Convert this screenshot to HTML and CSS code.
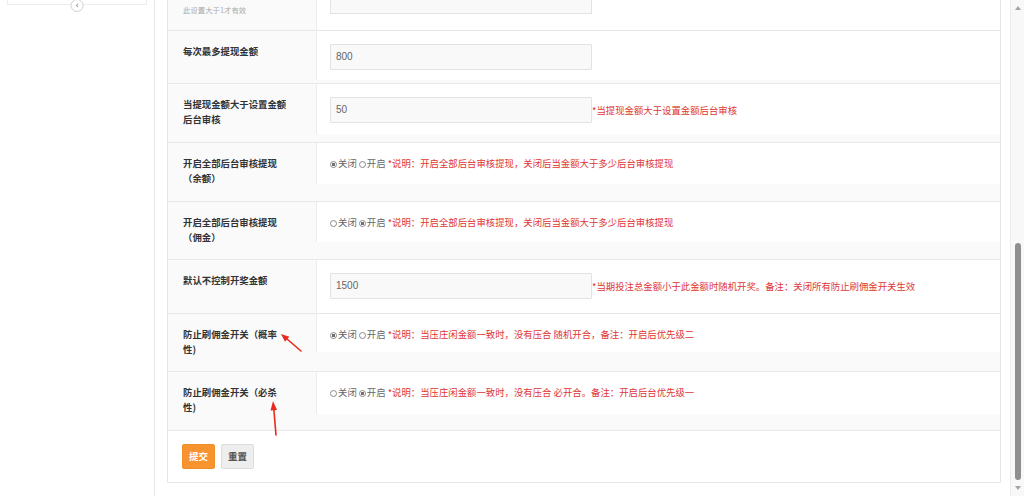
FILE: index.html
```html
<!DOCTYPE html>
<html lang="zh-CN">
<head>
<meta charset="utf-8">
<title>提现设置</title>
<link rel="stylesheet" href="styles.css">
</head>
<body>
<aside class="sidebar">
  <div class="side-top"><span class="collapse">‹</span></div>
</aside>
<main class="main">
  <div class="panel">
    <div class="row row-0">
      <div class="label label-tip"><span class="tip">此设置大于1才有效</span></div>
      <div class="cell cell-0"><div class="input input-cut"></div></div>
    </div>
    <div class="row row-1">
      <div class="label">每次最多提现金额</div>
      <div class="cell cell-1"><div class="field"><div class="input">800</div></div></div>
    </div>
    <div class="row row-2">
      <div class="label">当提现金额大于设置金额后台审核</div>
      <div class="cell cell-2"><div class="field"><div class="input">50</div><span class="note">*当提现金额大于设置金额后台审核</span></div></div>
    </div>
    <div class="row row-3">
      <div class="label">开启全部后台审核提现（余额）</div>
      <div class="cell cell-3"><div class="options"><span class="radio on"></span>关闭 <span class="radio"></span>开启 <span class="note">*说明：开启全部后台审核提现，关闭后当金额大于多少后台审核提现</span></div></div>
    </div>
    <div class="row row-4">
      <div class="label">开启全部后台审核提现（佣金）</div>
      <div class="cell cell-4"><div class="options"><span class="radio"></span>关闭 <span class="radio on"></span>开启 <span class="note">*说明：开启全部后台审核提现，关闭后当金额大于多少后台审核提现</span></div></div>
    </div>
    <div class="row row-5">
      <div class="label">默认不控制开奖金额</div>
      <div class="cell cell-5"><div class="field"><div class="input">1500</div><span class="note">*当期投注总金额小于此金额时随机开奖。备注：关闭所有防止刷佣金开关生效</span></div></div>
    </div>
    <div class="row row-6">
      <div class="label">防止刷佣金开关（概率性)</div>
      <div class="cell cell-6"><div class="options"><span class="radio on"></span>关闭 <span class="radio"></span>开启 <span class="note">*说明：当压庄闲金额一致时，没有压合 随机开合，备注：开启后优先级二</span></div></div>
    </div>
    <div class="row row-7">
      <div class="label">防止刷佣金开关（必杀性)</div>
      <div class="cell cell-7"><div class="options"><span class="radio"></span>关闭 <span class="radio on"></span>开启 <span class="note">*说明：当压庄闲金额一致时，没有压合 必开合。备注：开启后台优先级一</span></div></div>
    </div>
    <div class="actions">
      <span class="btn btn-primary">提交</span>
      <span class="btn btn-default">重置</span>
    </div>
  </div>
</main>
<div class="scrollbar">
  <span class="sb-up"></span>
  <span class="sb-thumb"></span>
  <span class="sb-down"></span>
</div>
<svg class="arrows" width="1024" height="496" viewBox="0 0 1024 496">
  <line x1="301" y1="351" x2="287" y2="339" stroke="#e8291e" stroke-width="1.6" stroke-linecap="round"/>
  <polygon points="281,334 289.3,336.7 285,341.7" fill="#e8291e"/>
  <line x1="276" y1="435" x2="273.8" y2="409" stroke="#e8291e" stroke-width="1.6" stroke-linecap="round"/>
  <polygon points="273,401 277,410 270.5,410.4" fill="#e8291e"/>
</svg>
</body>
</html>
```

FILE: styles.css
```css
html, body {
  margin: 0;
  padding: 0;
}

body {
  position: relative;
  width: 1024px;
  height: 496px;
  overflow: hidden;
  display: flex;
  background: #fff;
  font-family: "Noto Sans CJK SC", "Noto Sans", sans-serif;
  color: #333;
}

/* ---------- sidebar ---------- */
.sidebar {
  flex: none;
  width: 154px;
  border-right: 1px solid #e6e6e6;
}

.side-top {
  position: relative;
  margin: 0 7px;
  height: 4px;
  border: 1px solid #ececec;
  border-top: none;
}

.collapse {
  position: absolute;
  left: 50%;
  top: -1px;
  transform: translateX(-50%);
  width: 11px;
  height: 11px;
  border: 1px solid #d2d2d2;
  border-radius: 50%;
  background: #fff;
  color: #777;
  font-family: "DejaVu Sans", sans-serif;
  font-size: 9px;
  line-height: 10px;
  text-align: center;
}

/* ---------- main ---------- */
.main {
  flex: none;
  width: 855px;
  box-sizing: border-box;
  padding-left: 12px;
}

.panel {
  width: 834px;
  box-sizing: border-box;
  border: 1px solid #e6e6e6;
  border-top: none;
}

.row {
  display: flex;
  align-items: flex-start;
  background: #fafafa;
  border-bottom: 1px solid #e8e8e8;
}

.row-0 { height: 30px; }
.row-1 { height: 52px; }
.row-2 { height: 58px; }
.row-3 { height: 58px; }
.row-4 { height: 57px; }
.row-5 { height: 53px; }
.row-6 { height: 57px; }
.row-7 { height: 58px; }

.label {
  flex: none;
  width: 148px;
  box-sizing: border-box;
  padding: 12.5px 28px 0 15px;
  font-size: 9.4px;
  line-height: 15px;
  font-weight: bold;
  color: #333;
}

.label-tip {
  padding-top: 2px;
}

.tip {
  font-size: 7.4px;
  line-height: 10px;
  font-weight: normal;
  color: #aaa;
}

.cell {
  flex: 1;
  box-sizing: border-box;
  background: #fff;
  border-left: 1px solid #ececec;
  padding: 13px 0 0 13px;
}

.cell-0 { height: 30px; padding-top: 0; }
.cell-1 { height: 49px; }
.cell-2 { height: 50px; }
.cell-3 { height: 41px; }
.cell-4 { height: 40px; }
.cell-5 { height: 53px; }
.cell-6 { height: 38px; }
.cell-7 { height: 42px; }

.field {
  display: flex;
  align-items: center;
}

.input {
  flex: none;
  width: 262px;
  height: 26px;
  box-sizing: border-box;
  border: 1px solid #e2e2e2;
  border-radius: 1px;
  background: #f9f9f9;
  padding-left: 5px;
  font-family: "Liberation Sans", sans-serif;
  font-size: 10px;
  line-height: 24px;
  color: #666;
}

.input-cut {
  height: 14px;
  border-top: none;
}

.note {
  color: #e03535;
  font-size: 9.4px;
  line-height: 15px;
  white-space: nowrap;
}

.options {
  font-size: 9.4px;
  line-height: 15px;
  color: #666;
  white-space: nowrap;
}

.radio {
  display: inline-block;
  width: 5px;
  height: 5px;
  border: 1px solid #8a8a8a;
  border-radius: 50%;
  background: #fff;
  vertical-align: -0.5px;
  margin-right: 1px;
}

.radio.on {
  background: radial-gradient(circle, #6e6e6e 0 1.4px, #fff 1.9px);
}

/* ---------- actions ---------- */
.actions {
  display: flex;
  gap: 6px;
  height: 51px;
  box-sizing: border-box;
  padding: 13px 14px 0;
  background: #fff;
}

.btn {
  height: 25px;
  box-sizing: border-box;
  padding: 0 6px;
  border-radius: 2px;
  font-size: 9.5px;
  font-weight: bold;
  line-height: 23px;
}

.btn-primary {
  background: #f7942f;
  border: 1px solid #f28c26;
  color: #fff;
}

.btn-default {
  background: #eeeeee;
  border: 1px solid #dcdcdc;
  color: #555;
}

/* ---------- scrollbar ---------- */
.scrollbar {
  flex: none;
  width: 14px;
  height: 496px;
  box-sizing: border-box;
  border-left: 1px solid #ececec;
  background: #f8f8f8;
  display: flex;
  flex-direction: column;
  align-items: center;
}

.sb-up {
  margin-top: 6px;
  width: 0;
  height: 0;
  border-left: 3px solid transparent;
  border-right: 3px solid transparent;
  border-bottom: 4px solid #a3a3a3;
}

.sb-thumb {
  margin-top: 233px;
  width: 6px;
  height: 237px;
  border-radius: 3px;
  background: #8f8f8f;
}

.sb-down {
  margin-top: 6px;
  width: 0;
  height: 0;
  border-left: 3px solid transparent;
  border-right: 3px solid transparent;
  border-top: 4px solid #a3a3a3;
}

/* ---------- annotation arrows ---------- */
.arrows {
  position: absolute;
  top: 0;
  left: 0;
  pointer-events: none;
}
```
